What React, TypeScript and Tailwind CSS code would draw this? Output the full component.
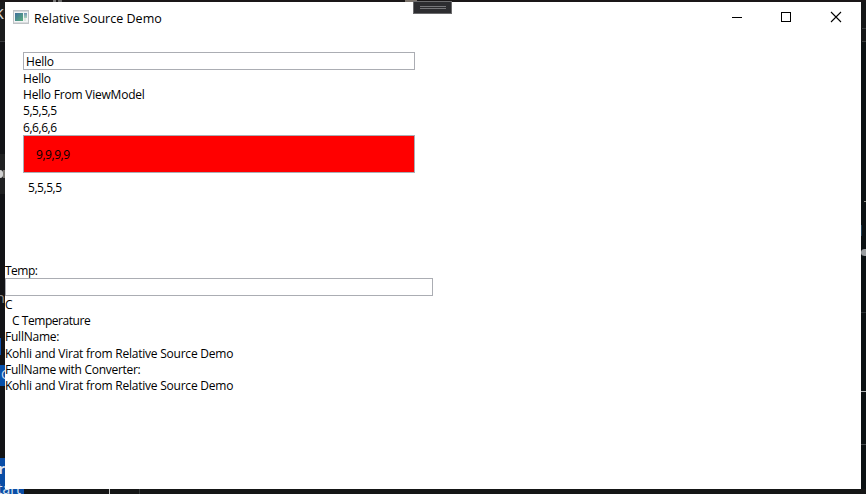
import type { ReactNode } from "react";

function Line({ children, className = "" }: { children: ReactNode; className?: string }) {
  return <div className={`whitespace-pre ${className}`}>{children}</div>;
}

function TopEdge() {
  return (
    <div className="flex h-[2px] bg-[#1a1718]">
      <div className="ml-[53px] w-[3px] bg-[#777777]" />
      <div className="ml-[2px] w-1 bg-[#666666]" />
      <div className="ml-[343px] w-3 bg-[#7c746c]" />
    </div>
  );
}

function LeftEdge() {
  return (
    <div className="flex w-[5px] flex-col overflow-hidden bg-[#121316] font-['Open_Sans',sans-serif]">
      <div className="flex h-[39px] justify-end bg-[#1b1c1d] pr-px text-[18px] leading-[21px] text-[#d0d0d0]">k</div>
      <div className="h-px bg-[#3a3b3d]" />
      <div className="h-28" />
      <div className="flex h-10 items-center bg-[#202122]">
        <div className="h-2 w-[3px] rounded-r-full bg-[#d0d0d0]" />
        <div className="h-2 w-[2px] bg-[#777570]" />
      </div>
      <div className="h-[92px]" />
      <div className="flex h-[22px] justify-end text-[15px] leading-[22px] text-[#8f8c88]">n</div>
      <div className="h-[30px]" />
      <div className="h-[17px] w-px bg-[#0b4fae]" />
      <div className="h-[10px]" />
      <div className="flex h-[21px] bg-[#0750aa] pl-px text-[13px] leading-[19px] text-[#c9d9ee]">C</div>
      <div className="h-[72px]" />
      <div className="flex h-[31px] justify-end bg-[#0a4da6] text-[15px] leading-[20px] font-bold text-[#dde6f2]">r</div>
    </div>
  );
}

function RightEdge() {
  return (
    <div className="flex w-[5px] flex-col items-end bg-[#0b1113]">
      <div className="h-[26px] w-full bg-[#151718]" />
      <div className="h-px w-1 bg-[#383b3c]" />
      <div className="h-3 w-full bg-[#151718]" />
      <div className="h-px w-1 bg-[#383b3c]" />
      <div className="h-[159px]" />
      <div className="h-px w-[2px] bg-[#92928a]" />
      <div className="h-[23px]" />
      <div className="h-[11px] w-px self-start bg-[#1c3c52]" />
      <div className="h-[13px]" />
      <div className="h-[7px] w-full rounded-l-sm bg-[#999da0]" />
      <div className="h-14" />
      <div className="h-px w-full bg-[#2b3033]" />
      <div className="h-[78px]" />
      <div className="h-px w-full bg-[#b0b4b5]" />
      <div className="h-[52px]" />
      <div className="h-px w-full bg-[#454a4d]" />
    </div>
  );
}

function BottomEdge() {
  return (
    <div className="flex h-[5px] bg-[#151616] font-['Open_Sans',sans-serif]">
      <div className="flex w-6 justify-end bg-[#0a4da6] pr-[3px] text-[14px] leading-[18px] text-[#dde6f2]">
        <span className="-mt-[9px] h-[18px]">start</span>
      </div>
      <div className="ml-[85px] w-px bg-[#c8c8c8]" />
      <div className="ml-[29px] w-px bg-[#333638]" />
    </div>
  );
}

function AppIcon() {
  return (
    <svg width="16" height="14" viewBox="0 0 16 14" shapeRendering="crispEdges">
      <defs>
        <linearGradient id="pane" x1="0" y1="0" x2="1" y2="1">
          <stop offset="0" stopColor="#3f6f9c" />
          <stop offset="1" stopColor="#5aae7d" />
        </linearGradient>
        <linearGradient id="side" x1="0" y1="0" x2="0" y2="1">
          <stop offset="0" stopColor="#6f93b5" />
          <stop offset="1" stopColor="#a9d3b8" />
        </linearGradient>
      </defs>
      <rect x="0.5" y="0.5" width="15" height="13" fill="#f3f4f5" stroke="#bfc3c6" />
      <rect x="1" y="1" width="14" height="1" fill="#d5d9dd" />
      <rect x="2" y="3" width="8" height="8" fill="url(#pane)" />
      <rect x="11" y="3" width="3" height="5" fill="url(#side)" />
      <rect x="11" y="8" width="2" height="3" fill="#dde8e2" />
      <rect x="1" y="12" width="14" height="1" fill="#d9dcde" />
    </svg>
  );
}

function TitleBar() {
  return (
    <div className="flex h-[31px] items-center">
      <div className="ml-2 flex w-[21px] pb-px"><AppIcon /></div>
      <div className="flex-1 pt-[3px] text-[12.5px] leading-4 tracking-[0.01px] whitespace-pre">Relative Source Demo</div>
      <svg width="125" height="30" viewBox="0 0 125 30" fill="none" stroke="#000" className="mr-1 self-start" shapeRendering="crispEdges">
        <path d="M0 15.5h10M49.5 10.5h9v9h-9z" />
        <path d="M99 10l10 10M109 10l-10 10" strokeWidth="1.1" shapeRendering="auto" />
      </svg>
    </div>
  );
}

function DragHandle() {
  return (
    <div className="absolute top-[1px] left-[413px] z-20 flex h-[13px] w-[39px] flex-col items-center justify-center gap-px border border-[#6b6b6d] bg-[#2d2d30]">
      <div className="h-px w-[26px] bg-[#77777a]" />
      <div className="h-px w-[26px] bg-[#77777a]" />
    </div>
  );
}

export default function App() {
  return (
    <div className="relative flex h-[494px] w-[866px] flex-col overflow-hidden">
      <TopEdge />
      <div className="flex h-[487px]">
        <LeftEdge />
        <main className="relative z-10 w-[856px] bg-white font-['Open_Sans','Noto_Sans',sans-serif] text-black">
          <TitleBar />
          <section className="ml-[18px] flex h-[230px] w-[392px] flex-col pt-[19px] text-[12px] leading-[16px] tracking-[-0.21px]">
            <div className="flex h-[18px] items-center border border-[#abadb3] pt-[2px] pl-[2px]">Hello</div>
            <Line className="pt-px">Hello</Line>
            <Line>Hello From ViewModel</Line>
            <Line className="tracking-[-0.45px]">5,5,5,5</Line>
            <Line className="h-4 pt-px tracking-[-0.45px]">6,6,6,6</Line>
            <div className="flex h-[38px] items-center border border-[#abadb3] bg-[#ff0000] pt-px pl-[12px] tracking-[-0.45px]">9,9,9,9</div>
            <Line className="pt-[7px] pl-[5px] tracking-[-0.45px]">5,5,5,5</Line>
          </section>
          <section className="flex w-[428px] flex-col text-[12px] leading-[16px] tracking-[-0.23px]">
            <Line className="h-[15px] tracking-[-0.5px]">Temp:</Line>
            <div className="h-[18px] border border-[#abadb3]" />
            <Line className="pt-px">C</Line>
            <Line className="pl-[7px] tracking-[-0.45px]">C Temperature</Line>
            <Line>FullName:</Line>
            <Line className="pt-px">Kohli and Virat from Relative Source Demo</Line>
            <Line className="tracking-[-0.28px]">FullName with Converter:</Line>
            <Line>Kohli and Virat from Relative Source Demo</Line>
          </section>
        </main>
        <RightEdge />
      </div>
      <BottomEdge />
      <DragHandle />
    </div>
  );
}
